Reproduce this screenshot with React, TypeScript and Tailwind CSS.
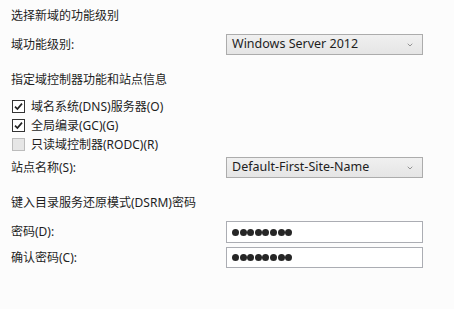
import { ChevronDown } from 'lucide-react';

const font = { fontFamily: '"Noto Sans", "Noto Sans CJK SC", sans-serif' };

function Select({ value }: { value: string }) {
  return (
    <div className="flex h-[21px] w-[197px] items-center justify-between border border-[#acacac] bg-gradient-to-b from-[#f0f0f0] to-[#e5e5e5] pl-[5px] pr-[8px] text-[12.5px] text-[#1e1e1e]">
      <span className="leading-none">{value}</span>
      <ChevronDown size={8} strokeWidth={2} className="text-[#666]" />
    </div>
  );
}

function Password({ h }: { h: string }) {
  return (
    <div className={`flex w-[197px] items-center gap-[0.6px] border border-[#abadb3] bg-white pl-[5px] ${h}`}>
      {Array.from({ length: 8 }).map((_, i) => (
        <span key={i} className="h-[7px] w-[7px] rounded-full bg-[#262626]" />
      ))}
    </div>
  );
}

function Check({ label, checked, disabled }: { label: string; checked?: boolean; disabled?: boolean }) {
  return (
    <div className="flex h-[19px] items-center gap-[6px]">
      <div
        className={
          disabled
            ? 'h-[13px] w-[13px] border border-[#bcbcbc] bg-[#e6e6e6]'
            : 'flex h-[13px] w-[13px] items-center justify-center border border-[#333] bg-white'
        }
      >
        {checked ? (
          <svg width="9" height="9" viewBox="0 0 9 9">
            <path d="M1 4.6 L3.4 7 L8 1.6" fill="none" stroke="#222" strokeWidth="1.7" />
          </svg>
        ) : null}
      </div>
      <span className="leading-none">{label}</span>
    </div>
  );
}

export default function App() {
  return (
    <div className="h-[309px] w-[454px] bg-[#fcfcfc] pl-[11px] pt-[6px] text-[12px] text-[#1e1e1e]" style={font}>
      <div className="flex h-[20px] items-center">选择新域的功能级别</div>

      <div className="mt-[8px] flex items-center">
        <div className="w-[215px]">域功能级别:</div>
        <Select value="Windows Server 2012" />
      </div>

      <div className="mt-[15px] flex h-[20px] items-center">指定域控制器功能和站点信息</div>

      <div className="mt-[7px] pl-[1px]">
        <Check label="域名系统(DNS)服务器(O)" checked />
        <Check label="全局编录(GC)(G)" checked />
        <Check label="只读域控制器(RODC)(R)" disabled />
      </div>

      <div className="mt-[3px] flex items-center">
        <div className="w-[215px]">站点名称(S):</div>
        <Select value="Default-First-Site-Name" />
      </div>

      <div className="mt-[15px] flex h-[20px] items-center">键入目录服务还原模式(DSRM)密码</div>

      <div className="mt-[8px] flex items-center">
        <div className="w-[215px]">密码(D):</div>
        <Password h="h-[22px]" />
      </div>
      <div className="mt-[4px] flex items-center">
        <div className="w-[215px]">确认密码(C):</div>
        <Password h="h-[21px]" />
      </div>
    </div>
  );
}
